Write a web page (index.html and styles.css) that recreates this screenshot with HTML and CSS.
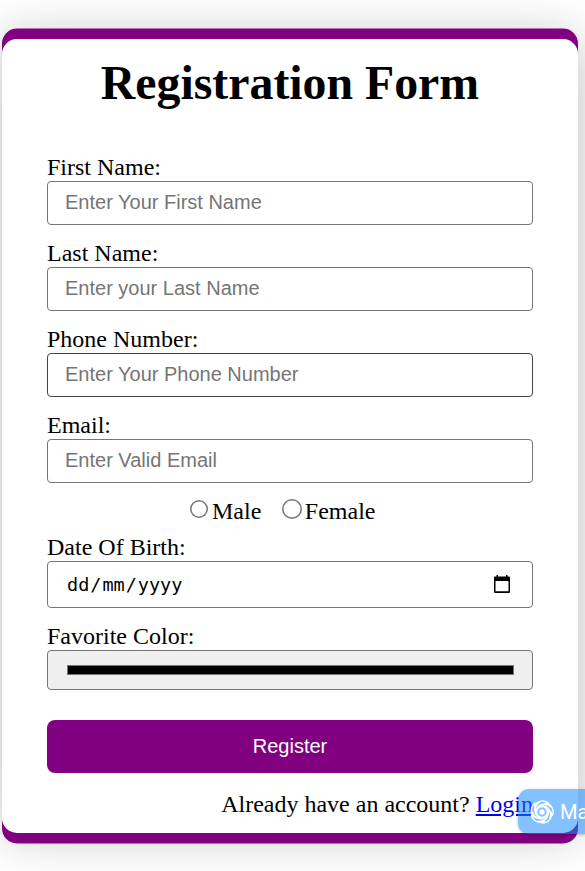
FILE: index.html
```html
<!DOCTYPE html>
<html lang="en">
<head>
<meta charset="utf-8">
<title>Registration Form</title>
<link rel="stylesheet" href="styles.css">
</head>
<body>
<form class="card">
  <h1 class="title">Registration Form</h1>
  <label class="label" for="first">First Name:</label>
  <input class="field" id="first" type="text" placeholder="Enter Your First Name">
  <label class="label" for="last">Last Name:</label>
  <input class="field" id="last" type="text" placeholder="Enter your Last Name">
  <label class="label" for="phone">Phone Number:</label>
  <input class="field field-dark" id="phone" type="text" placeholder="Enter Your Phone Number">
  <label class="label" for="email">Email:</label>
  <input class="field" id="email" type="text" placeholder="Enter Valid Email">
  <div class="genders">
    <span class="radio"></span><span class="male">Male</span>
    <span class="radio radio-large"></span><span>Female</span>
  </div>
  <span class="label">Date Of Birth:</span>
  <div class="date">
    <span class="date-text"><span>dd</span><span class="slash">/</span><span>mm</span><span class="slash">/</span><span>yyyy</span></span>
    <svg class="calendar" width="16" height="18" viewBox="0 0 16 18"><path fill="#000" fill-rule="evenodd" d="M2.5 0h1.500v1.500h8V0h1.500v1.500H15a1 1 0 0 1 1 1V17a1 1 0 0 1-1 1H1a1 1 0 0 1-1-1V2.500a1 1 0 0 1 1-1h1.500zM1.500 6v10.300h13V6z"/></svg>
  </div>
  <span class="label">Favorite Color:</span>
  <div class="color"><span class="swatch"></span></div>
  <button class="register" type="button">Register</button>
  <p class="account">Already have an account? <a href="#">Login</a></p>
</form>
<div class="badge">
  <svg class="swirl" width="24" height="24" viewBox="-12 -12 24 24" fill="none" stroke="#fff" stroke-linecap="round">
    <circle r="2.700" fill="#fff" stroke="none"/>
    <circle r="5.600" stroke-width="1.800"/>
    <g id="arm"><path stroke-width="1.700" d="M-5.500-1C-5.500-6.500 3-10.500 8.500-5.500"/><path stroke-width="1.300" d="M-7.500-6C-5-11.500 2-12.500 6.500-9"/></g>
    <use href="#arm" transform="rotate(72)"/><use href="#arm" transform="rotate(144)"/><use href="#arm" transform="rotate(216)"/><use href="#arm" transform="rotate(288)"/>
  </svg>
  <span>Ma</span>
</div>
</body>
</html>
```
FILE: styles.css
```css
* { box-sizing: border-box; }
body {
  margin: 0;
  width: 585px;
  height: 871px;
  overflow: hidden;
  background: #fff;
  font-family: "Liberation Serif", serif;
  font-size: 24px;
  color: #000;
}
.card {
  display: flex;
  flex-direction: column;
  width: 576px;
  height: 794px;
  margin: 39px 0 0 2px;
  padding: 0 45px;
  border-radius: 15px;
  background: #fff;
  box-shadow: 0 -10.500px 0 purple, 0 10.500px 0 purple, 0 0 52px rgba(0, 0, 0, .27);
}
.title {
  margin: 0 0 28px;
  height: 87px;
  line-height: 87px;
  font-size: 47.800px;
  text-align: center;
  white-space: nowrap;
}
.label { height: 27px; line-height: 27px; }
.field {
  width: 486px;
  height: 44px;
  margin: 0 0 15px;
  padding: 0 17px 2px;
  border: 1px solid #767676;
  border-radius: 4px;
  background: #fff;
  font: 20px "Liberation Sans", sans-serif;
}
.field-dark { border-color: #444; }
.field::placeholder { color: #757575; opacity: 1; }
.genders {
  display: flex;
  align-items: center;
  height: 27px;
  margin: 0 0 9px 143px;
}
.radio {
  width: 18px;
  height: 18px;
  margin: -6px 4px 0 0;
  border-radius: 50%;
  box-shadow: inset 0 0 0 1.500px #767676;
}
.radio-large { width: 20px; height: 20px; margin-right: 3px; }
.male { margin-right: 20.500px; }
.date {
  display: flex;
  align-items: center;
  justify-content: space-between;
  height: 47px;
  margin-bottom: 15px;
  padding: 0 22px 0 19px;
  border: 1px solid #767676;
  border-radius: 4px;
}
.date-text { font: 18.500px "DejaVu Sans Mono", monospace; }
.slash { padding: 0 1px; }
.calendar { margin-top: -2px; }
.color {
  height: 40px;
  margin-bottom: 30px;
  padding: 14px 18px 0 19px;
  border: 1px solid #767676;
  border-radius: 4px;
  background: #efefef;
}
.swatch { display: block; height: 10px; background: #000; border: 1px solid #767676; }
.register {
  height: 53px;
  margin: 0 0 18px;
  padding: 0;
  border: 0;
  border-radius: 8px;
  background: purple;
  color: #fff;
  font: 20px "Liberation Sans", sans-serif;
}
.account { margin: 0; line-height: 27px; text-align: right; white-space: nowrap; }
.account a { color: #00e; }
.badge {
  position: absolute;
  left: 518px;
  top: 789px;
  width: 67px;
  height: 45px;
  display: flex;
  align-items: center;
  gap: 6px;
  padding-left: 12px;
  border-radius: 11px 0 0 11px;
  background: rgba(20, 136, 255, .52);
  box-shadow: 0 1px 3px rgba(0, 0, 0, .25);
  color: #fff;
  font: 400 20px Roboto, sans-serif;
}
.swirl { flex: none; }
```
